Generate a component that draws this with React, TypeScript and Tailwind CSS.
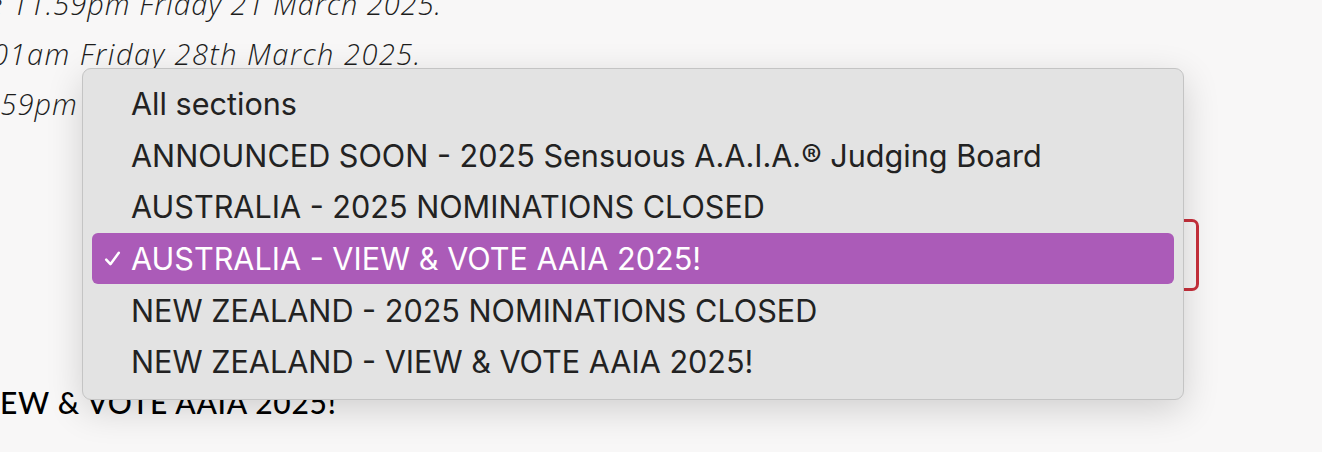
const sections = [
  "All sections",
  "ANNOUNCED SOON - 2025 Sensuous A.A.I.A.® Judging Board",
  "AUSTRALIA - 2025 NOMINATIONS CLOSED",
  "AUSTRALIA - VIEW & VOTE AAIA 2025!",
  "NEW ZEALAND - 2025 NOMINATIONS CLOSED",
  "NEW ZEALAND - VIEW & VOTE AAIA 2025!",
];

const selected = 3;

function CheckIcon() {
  return (
    <svg width="17" height="17" viewBox="0 0 17 17" className="shrink-0">
      <path
        d="M2.2 9.6 L6.4 14.2 L14.8 2.8"
        fill="none"
        stroke="white"
        strokeWidth="2.5"
        strokeLinecap="round"
        strokeLinejoin="round"
      />
    </svg>
  );
}

function SectionMenu() {
  return (
    <div className="absolute left-[82px] top-[68px] w-[1102px] rounded-[9px] border border-[#c4c4c4] bg-[#e3e3e3] pt-[9px] pb-[11px] shadow-[0_10px_36px_rgba(0,0,0,0.16)]">
      {sections.map((label, i) => {
        const active = i === selected;
        return (
          <div
            key={label}
            className={
              active
                ? "mx-[9px] flex h-[51.6px] items-center rounded-[6px] bg-[#ab5bb8] text-white"
                : "mx-[9px] flex h-[51.6px] items-center text-[#222222]"
            }
          >
            <span className="flex w-[39px] justify-end pr-[10px]">
              {active && <CheckIcon />}
            </span>
            <span className="whitespace-nowrap text-[30.6px] leading-[51px] font-[Inter,'Liberation_Sans',sans-serif]">
              {label}
            </span>
          </div>
        );
      })}
    </div>
  );
}

export default function App() {
  return (
    <div className="relative h-[452px] w-[1322px] overflow-hidden bg-[#f8f7f7] font-['Open_Sans',Lato,sans-serif]">
      <div className="flex flex-col">
        <div className="-mt-[21px] flex flex-col text-[29px] font-light italic leading-[50px] tracking-[1px] text-[#1d1d1d]">
          <p className="-ml-[12px] whitespace-nowrap">e 11.59pm Friday 21 March 2025.</p>
          <p className="-ml-[8px] whitespace-nowrap tracking-[1.5px]">01am Friday 28th March 2025.</p>
          <p className="-ml-[7px] whitespace-nowrap">:59pm Sunday 6th April 2025.</p>
        </div>

        <div className="mt-[90px] ml-[100px] h-[72px] w-[1099px] rounded-[7px] border-[3px] border-[#c8303c]" />

        <p className="mt-[93px] whitespace-nowrap font-[Lato,sans-serif] text-[30px] font-medium leading-[36px] tracking-[0.7px] text-black">
          EW &amp; VOTE AAIA 2025!
        </p>
      </div>

      <SectionMenu />
    </div>
  );
}
